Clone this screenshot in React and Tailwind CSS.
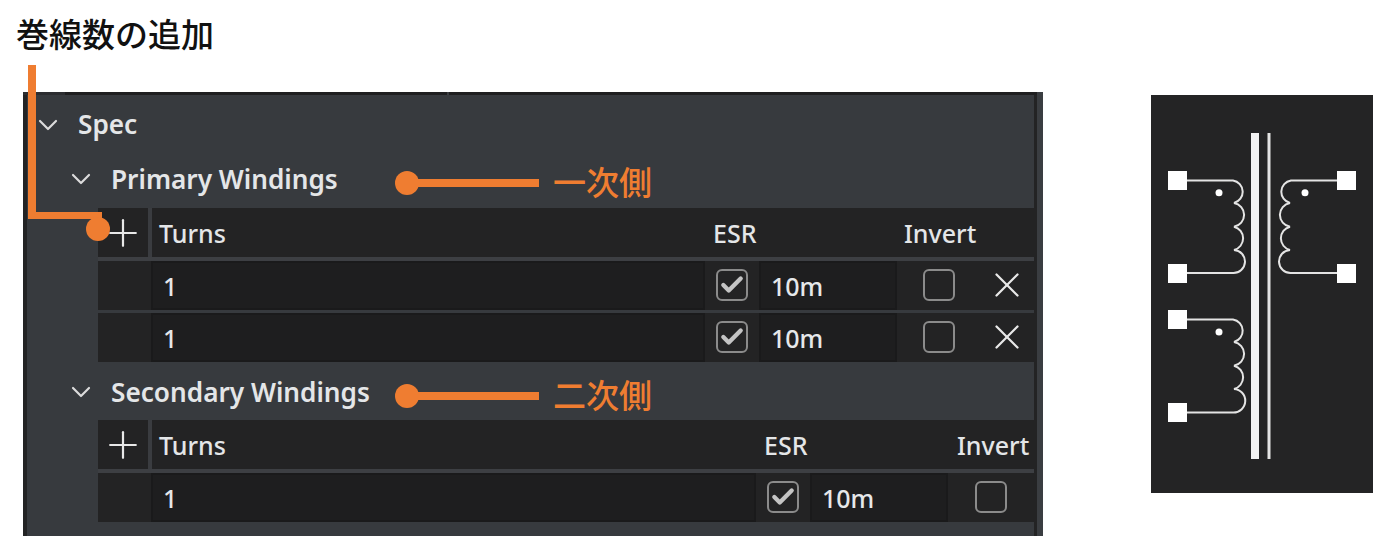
import { Check, ChevronDown, Plus, X } from 'lucide-react';

const FONT = "font-['Noto_Sans','Noto_Sans_CJK_JP',sans-serif]";
const COLS_PRIMARY = 'grid-cols-[50px_3px_554px_54px_138px_83px_54px]';
const COLS_SECONDARY = 'grid-cols-[50px_3px_605px_54px_138px_86px]';

function Section({ label, pad, h }) {
  return (
    <div className={`flex items-center ${pad} ${h}`}>
      <ChevronDown size={32} strokeWidth={1.6} className="text-[#dcdcdc] shrink-0" />
      <span className="pl-[14px] text-[26.2px] font-semibold leading-none text-[#e4e6e8] whitespace-nowrap">{label}</span>
    </div>
  );
}

function Box({ checked }) {
  return (
    <div className="flex items-center justify-center w-[32px] h-[32px] rounded-[6px] border-2 border-[#8b8b8b]">
      {checked && <Check size={26} strokeWidth={4} className="text-[#c4c4c4]" />}
    </div>
  );
}

function Field({ value }) {
  return (
    <div className="flex items-center h-full pl-[10px] pt-[2px] bg-[#1e1e1f] border-2 border-[#1a1a1b] text-[25px] font-medium text-[#e6e8ea]">{value}</div>
  );
}

function Table({ cols, esrClass, rows, remove }) {
  return (
    <div className="ml-[71px] w-[936px]">
      <div className="flex h-[49px] bg-[#232324]">
        <div className="flex items-center justify-center w-[50px]">
          <Plus size={44} strokeWidth={1.2} className="text-[#e8e8e8]" />
        </div>
        <div className="w-[4px] bg-[#3a3c40]" />
        <div className="flex items-center flex-1 pl-[7px] pt-[2px] text-[25px] font-medium text-[#e4e6e8]">
          <span className="w-[554px]">Turns</span>
          <span className={esrClass}>ESR</span>
          <span>Invert</span>
        </div>
      </div>
      <div className="h-[4px] bg-[#3d3f43]" />
      {rows.map((r, i) => (
        <div key={i} className={`grid ${cols} h-[49px] bg-[#232324] ${i > 0 ? 'mt-[3px]' : ''}`}>
          <div />
          <div />
          <Field value={r.turns} />
          <div className="flex items-center justify-center pb-[1px]"><Box checked /></div>
          <Field value={r.esr} />
          <div className="flex items-center justify-center pb-[1px]"><Box /></div>
          {remove && (
            <div className="flex items-center justify-center pb-[2px]">
              <X size={42} strokeWidth={1.3} className="text-[#e8e8e8]" />
            </div>
          )}
        </div>
      ))}
    </div>
  );
}

function Callout({ top, text }) {
  return (
    <div className="absolute left-[395px] flex items-center" style={{ top }}>
      <div className="w-[24px] h-[24px] rounded-full bg-[#ef7d31]" />
      <div className="w-[122px] h-[8px] -ml-[2px] bg-[#ef7d31]" />
      <span className="ml-[14px] text-[33px] font-medium leading-[32px] text-[#ef7d31] whitespace-nowrap">{text}</span>
    </div>
  );
}

function Coil({ d }) {
  return <path d={d} fill="none" stroke="#e4e4e4" strokeWidth="2" />;
}

function Transformer() {
  const squares = [[1168, 171], [1168, 264], [1337, 171], [1337, 264], [1168, 310], [1168, 403]];
  return (
    <svg viewBox="1151 95 222 398" className="w-[222px] h-[398px] block">
      <rect x="1251" y="133" width="8" height="326" fill="#f2f2f2" />
      <rect x="1267.5" y="133" width="3" height="326" fill="#e4e4e4" />
      {squares.map(([x, y]) => (
        <rect key={`${x}-${y}`} x={x} y={y} width="19" height="19" fill="#fff" />
      ))}
      <Coil d="M1187 180.5H1233A11.5 11.5 0 0 1 1234 203A12 12 0 0 1 1234 226.7A12 12 0 0 1 1234 250A11.5 11.5 0 0 1 1233 273H1187" />
      <Coil d="M1337 180.5H1291A11.5 11.5 0 0 0 1290 203A12 12 0 0 0 1290 226.7A12 12 0 0 0 1290 250A11.5 11.5 0 0 0 1291 273H1337" />
      <Coil d="M1187 319.5H1233A11.5 11.5 0 0 1 1234 342A12 12 0 0 1 1234 365.7A12 12 0 0 1 1234 389A11.5 11.5 0 0 1 1233 412.5H1187" />
      <circle cx="1219" cy="192.7" r="3.5" fill="#fff" />
      <circle cx="1305" cy="192.7" r="3.5" fill="#fff" />
      <circle cx="1219" cy="332" r="3.5" fill="#fff" />
    </svg>
  );
}

export default function App() {
  return (
    <div className={`relative flex w-[1373px] h-[536px] bg-white overflow-hidden ${FONT}`}>
      <div className="w-[1043px] shrink-0">
        <div className="h-[92px] pl-[16px] pt-[15px] text-[33px] font-medium leading-[40px] text-[#111] whitespace-nowrap">巻線数の追加</div>
        <div className="pl-[23px]">
          {/* tab strip along the top edge */}
          <div className="flex h-[3px] bg-[#1f1f20]">
            <div className="w-[42px] bg-[#2c2d30]" />
            <div className="ml-[382px] w-[2px] bg-[#3a3c40]" />
            <div className="ml-auto w-[6px] bg-[#3a3d41]" />
          </div>
          <div className="h-[441px] border-l-[4px] border-l-[#232324] bg-[#373a3e] flex">
            <div className="w-[1007px]">
              <Section label="Spec" h="h-[57px]" pad="pl-[5px] pt-[2px]" />
              <Section label="Primary Windings" h="h-[56px]" pad="pl-[38px] pb-[2px]" />
              <Table
                cols={COLS_PRIMARY}
                esrClass="w-[191px]"
                rows={[{ turns: '1', esr: '10m' }, { turns: '1', esr: '10m' }]}
                remove
              />
              <Section label="Secondary Windings" h="h-[58px]" pad="pl-[38px] pt-[2px]" />
              <Table
                cols={COLS_SECONDARY}
                esrClass="ml-[51px] w-[193px]"
                rows={[{ turns: '1', esr: '10m' }]}
              />
            </div>
            <div className="w-[3px] bg-[#232324]" />
            <div className="flex-1 bg-[#3a3d41]" />
          </div>
        </div>
      </div>
      <div className="ml-[108px] mt-[95px] h-[398px] bg-[#242425]">
        <Transformer />
      </div>

      {/* orange annotations */}
      <div className="absolute left-[28px] top-[65px] w-[8px] h-[154px] bg-[#ef7d31]" />
      <div className="absolute left-[28px] top-[212px] w-[74px] h-[7px] bg-[#ef7d31]" />
      <div className="absolute left-[86px] top-[217px] w-[24px] h-[24px] rounded-full bg-[#ef7d31]" />
      <Callout top="167px" text="一次側" />
      <Callout top="380px" text="二次側" />
    </div>
  );
}
